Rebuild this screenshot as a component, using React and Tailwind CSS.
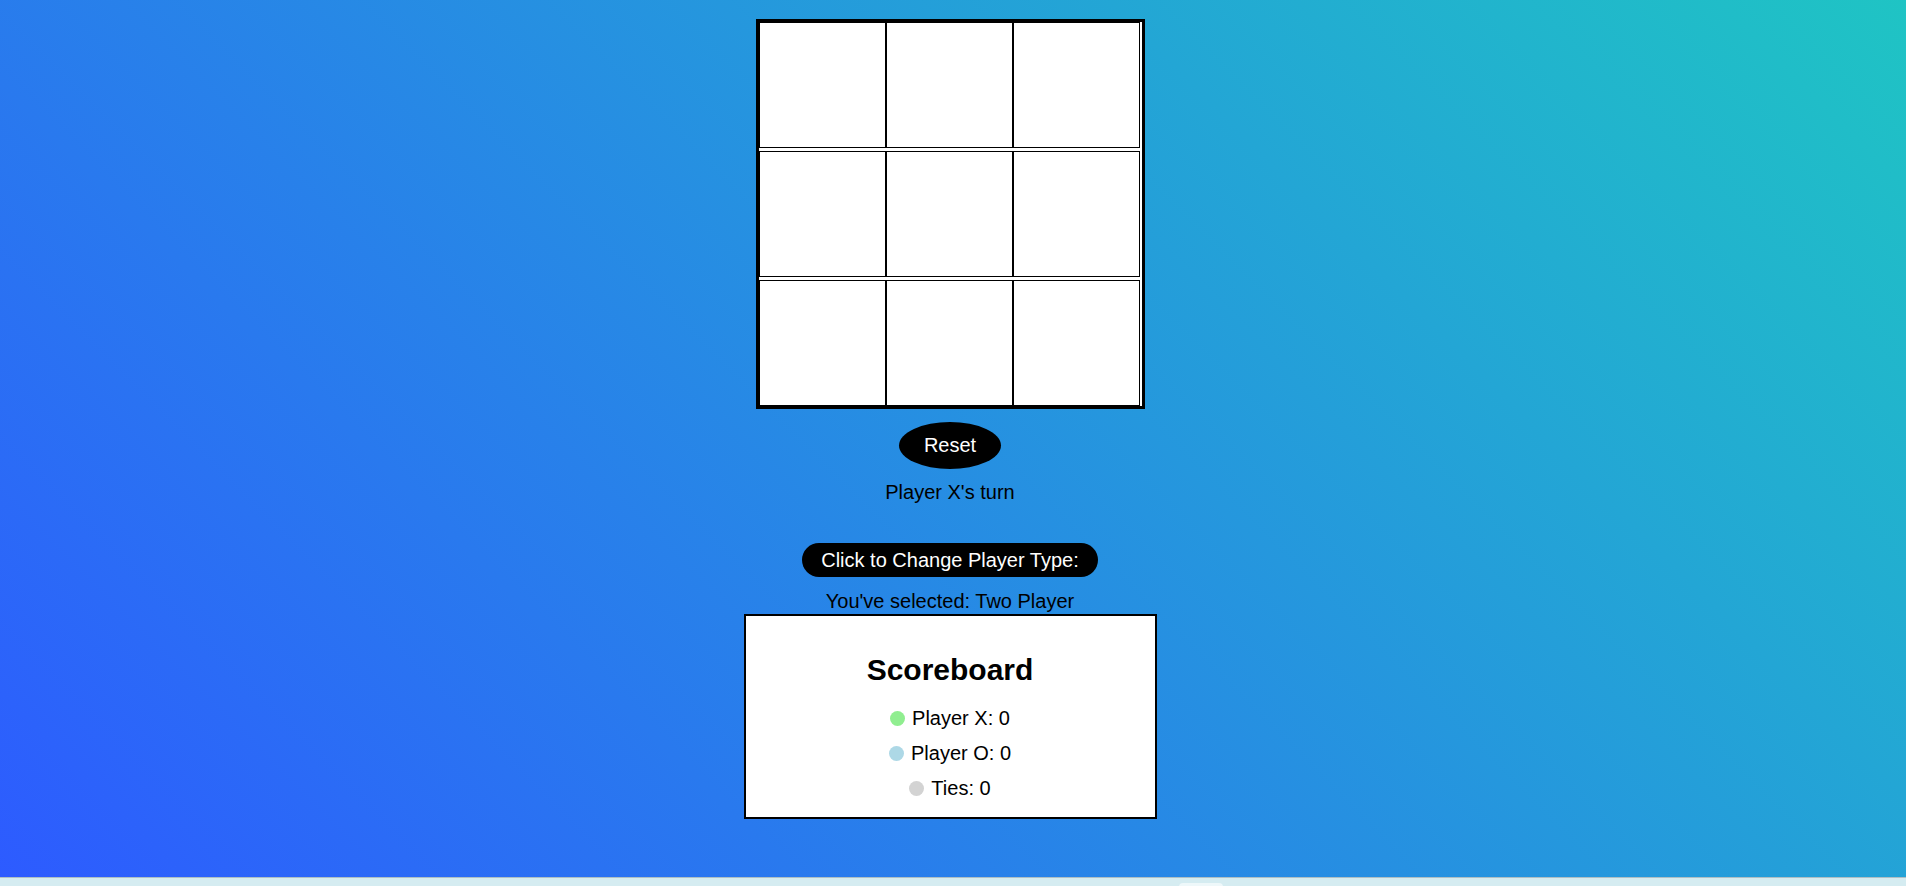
export default function App() {
  const cells = Array.from({ length: 9 });
  return (
    <div className="w-[1906px] h-[886px] overflow-hidden flex flex-col font-['Liberation_Sans',Arial,sans-serif] text-black">
      <div className="h-[877px] bg-[linear-gradient(45deg,#2d5bff,#1fc4c4)]">
        <div className="w-[1900px] flex flex-col items-center pt-[19px]">
          <div className="w-[389px] h-[390px] border-[3px] border-black bg-white grid grid-cols-[repeat(3,127px)] grid-rows-[repeat(3,126px)] gap-y-[3px]">
            {cells.map((_, i) => (
              <button key={i} className="border border-black bg-white" />
            ))}
          </div>
          <button className="mt-[13px] w-[102px] h-[47px] rounded-[50%] bg-black text-white text-[20px] leading-[23px]">
            Reset
          </button>
          <div className="mt-[12px] text-[20px] leading-[23px]">Player X's turn</div>
          <button className="mt-[39px] w-[296px] h-[34px] rounded-full bg-black text-white text-[20px] leading-[23px]">
            Click to Change Player Type:
          </button>
          <div className="mt-[13px] text-[20px] leading-[23px]">You've selected: Two Player</div>
          <div className="mt-[1px] w-[413px] h-[205px] border-2 border-black bg-white flex flex-col items-center pt-[37px]">
            <div className="text-[30px] leading-[34px] font-bold">Scoreboard</div>
            <div className="mt-[20px] flex flex-col items-center gap-[12px] text-[20px] leading-[23px]">
              <div className="flex items-center gap-[7px]">
                <span className="w-[15px] h-[15px] rounded-full bg-[#90ee90]" />
                <span>Player X: 0</span>
              </div>
              <div className="flex items-center gap-[7px]">
                <span className="w-[15px] h-[15px] rounded-full bg-[#add8e6]" />
                <span>Player O: 0</span>
              </div>
              <div className="flex items-center gap-[7px]">
                <span className="w-[15px] h-[15px] rounded-full bg-[#d3d3d3]" />
                <span>Ties: 0</span>
              </div>
            </div>
          </div>
        </div>
      </div>
      <div className="flex-1 border-t border-[#aebfc4] bg-[#d5ecf1] relative">
        <div className="absolute left-[1179px] top-[5px] w-[44px] h-[10px] rounded-t-[4px] bg-[#eef8fa]" />
      </div>
    </div>
  );
}
